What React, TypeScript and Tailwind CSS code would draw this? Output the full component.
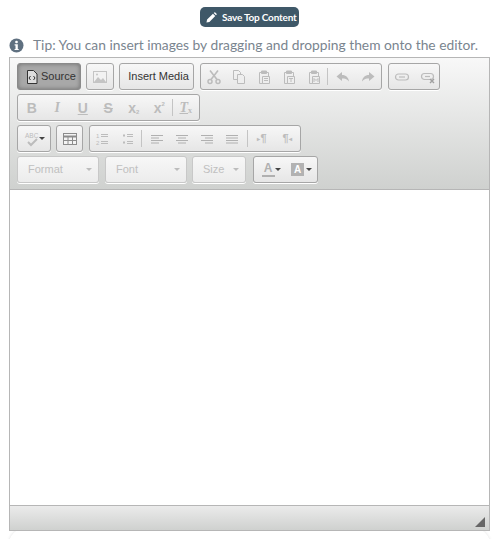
import type { ReactNode } from 'react'

const groupCls =
  'flex h-[27px] items-center rounded-[3px] border border-[#a6a6a6] bg-gradient-to-b from-[#f7f7f7] to-[#e6e6e6] shadow-[0_1px_0_#ffffff]'

function Ic({ children, w = 16, cls = 'text-[#bcbcbc]' }: { children: ReactNode; w?: number; cls?: string }) {
  return (
    <svg width={w} height={16} viewBox={`0 0 ${w} 16`} className={`block shrink-0 ${cls}`} fill="none" stroke="currentColor">
      {children}
    </svg>
  )
}

function Sep() {
  return <div className="h-[17px] w-px shrink-0 bg-[#c4c4c4]" />
}

function Caret({ dark = false }: { dark?: boolean }) {
  return <div className={`ml-[3px] h-0 w-0 border-x-[3px] border-t-[3px] border-x-transparent ${dark ? 'border-t-[#444]' : 'border-t-[#bcbcbc]'}`} />
}

function Letter({ children, cls = '' }: { children: ReactNode; cls?: string }) {
  return <span className={`flex w-[25.5px] items-center justify-center font-['Liberation_Sans',sans-serif] text-[14px] leading-none text-[#bcbcbc] ${cls}`}>{children}</span>
}

function Clip({ mark }: { mark?: ReactNode }) {
  return (
    <Ic>
      <path d="M3.5 3.5h9v11h-9z" />
      <path d="M5.5 2h5v2.5h-5z" fill="currentColor" />
      <path d="M6.5 7.5h7v7h-7z" fill="#eeeeee" />
      {mark}
    </Ic>
  )
}

function Align({ d }: { d: string }) {
  return (
    <Ic cls="text-[#b0b0b0]">
      <path d={d} />
    </Ic>
  )
}

function Combo({ label, w }: { label: string; w: string }) {
  return (
    <div className={`${groupCls} ${w} justify-between border-[#c8c8c8] from-[#f5f5f5] to-[#ececec] pl-[10px] pr-[6px]`}>
      <span className="font-['Liberation_Sans',sans-serif] text-[11px] text-[#c0c0c0]">{label}</span>
      <Caret />
    </div>
  )
}

function Row({ children }: { children: ReactNode }) {
  return <div className="flex gap-[5px]">{children}</div>
}

export default function App() {
  return (
    <div className="h-[539px] w-[499px] overflow-hidden bg-white font-['Liberation_Sans',sans-serif]">
      <div className="flex justify-center pt-[7px]">
        <button className="flex h-[20px] w-[99px] items-center gap-[5px] rounded-[5px] bg-[#3f5868] pl-[6px] font-['Lato',sans-serif] text-[10px] font-bold tracking-[-0.2px] whitespace-nowrap text-white">
          <svg width="11" height="11" viewBox="0 0 12 12" fill="white" className="shrink-0">
            <path d="M0.5 11.5l0.7-3.2 6.4-6.4 2.5 2.5-6.4 6.4zM8.4 1.1l0.7-0.6q0.5-0.4 1 0l1.4 1.4q0.4 0.5 0 1l-0.6 0.7z" />
          </svg>
          Save Top Content
        </button>
      </div>

      <div className="mt-[8px] flex h-[20px] items-center pl-[9px]">
        <svg width="15" height="15" viewBox="0 0 15 15" className="shrink-0">
          <circle cx="7.5" cy="7.5" r="7" fill="#5f7080" />
          <rect x="6.2" y="2.8" width="2.6" height="2.4" rx="1" fill="white" />
          <path d="M5.6 6.2h3.2v4.7h0.9v1.2H5.6v-1.2h0.9V7.4h-0.9z" fill="white" />
        </svg>
        <span className="ml-[9px] whitespace-nowrap font-['Lato',sans-serif] text-[13.8px] text-[#7a858f]">
          Tip: You can insert images by dragging and dropping them onto the editor.
        </span>
      </div>

      <div className="relative z-10 ml-[9px] mt-[2px] flex h-[474px] w-[481px] flex-col border border-[#b6b6b6]">
        <div className="flex h-[132px] flex-col gap-[4px] border-b border-[#b6b6b6] bg-gradient-to-b from-[#f8f8f8] to-[#cfd1cf] pl-[7px] pt-[5px]">
          <Row>
            <div className="flex h-[27px] w-[64px] items-center gap-[2px] rounded-[3px] border border-[#8a8a8a] bg-[#a8a8a8] pl-[7px] shadow-[inset_0_0_4px_#6f6f6f]">
              <Ic w={14} cls="text-[#333]">
                <path d="M2.5 1.5h6l3.5 3.5v9.5h-9.5z" fill="#dddddd" />
                <path d="M5.5 7l-1.5 2 1.5 2M8.5 7l1.5 2-1.5 2" />
              </Ic>
              <span className="text-[11px] text-[#333]">Source</span>
            </div>
            <div className={`${groupCls} w-[28px] justify-center`}>
              <Ic cls="text-[#c4c4c4]">
                <rect x="1.5" y="2.5" width="13" height="11" fill="#f2f2f2" />
                <path d="M2 13l4-5 3 3 2-2 3 4z" fill="currentColor" stroke="none" />
                <circle cx="5" cy="5.5" r="1" fill="currentColor" stroke="none" />
              </Ic>
            </div>
            <div className={`${groupCls} w-[75px] justify-center pl-[4px] text-[11px] text-[#333]`}>Insert Media</div>
            <div className={`${groupCls} ml-px w-[182px] pl-[5px]`}>
              <Ic>
                <path d="M4 1.5l7 9M12 1.5l-7 9" strokeWidth="1.6" />
                <circle cx="4" cy="12.5" r="2" strokeWidth="1.5" />
                <circle cx="12" cy="12.5" r="2" strokeWidth="1.5" />
              </Ic>
              <div className="ml-[9px]">
                <Ic>
                  <path d="M2.5 1.5h5l2 2v7h-7z" />
                  <path d="M6.5 5.5h5l2 2v7h-7z" fill="#eeeeee" />
                </Ic>
              </div>
              <div className="ml-[9px]">
                <Clip mark={<path d="M8 9.5h4M8 11.5h4" />} />
              </div>
              <div className="ml-[9px]">
                <Clip mark={<path d="M8 9.5h4M10 9.5v3.5" />} />
              </div>
              <div className="ml-[9px]">
                <Clip mark={<path d="M8 13V9.5l2 2 2-2V13" />} />
              </div>
              <div className="ml-[5px]">
                <Sep />
              </div>
              <div className="ml-[7px]">
                <Ic>
                  <path d="M7 3L1.5 7.5 7 12V9.5c3 0 5 .5 7 3-.5-4-3-6.5-7-6.5z" fill="currentColor" stroke="none" />
                </Ic>
              </div>
              <div className="ml-[9px]">
                <Ic>
                  <path d="M9 3l5.5 4.5L9 12V9.5c-3 0-5 .5-7 3 .5-4 3-6.5 7-6.5z" fill="currentColor" stroke="none" />
                </Ic>
              </div>
            </div>
            <div className={`${groupCls} ml-px w-[52px] gap-[10px] pl-[5px]`}>
              <Ic>
                <rect x="1.5" y="5" width="13" height="6" rx="3" strokeWidth="1.2" />
                <path d="M5 8h6" strokeWidth="1.2" />
              </Ic>
              <Ic>
                <rect x="1.5" y="4.5" width="12" height="6" rx="3" strokeWidth="1.2" />
                <path d="M5 7.5h5" strokeWidth="1.2" />
                <path d="M10 10l4 4M14 10l-4 4" strokeWidth="1.4" className="text-[#a0a0a0]" />
              </Ic>
            </div>
          </Row>

          <Row>
            <div className={`${groupCls} w-[183px] pl-px`}>
              <Letter cls="font-bold">B</Letter>
              <Letter cls="italic font-bold font-['Liberation_Serif',serif]">I</Letter>
              <Letter cls="underline font-bold">U</Letter>
              <Letter cls="line-through font-bold">S</Letter>
              <Letter cls="font-bold text-[12px]">
                x<span className="self-end text-[6px] leading-none">2</span>
              </Letter>
              <Letter cls="font-bold text-[12px]">
                x<span className="self-start text-[6px] leading-none">2</span>
              </Letter>
              <Sep />
              <Letter cls="italic font-bold font-['Liberation_Serif',serif] text-[#aaaaaa]">
                <span className="underline">T</span>
                <span className="self-end text-[8px] leading-none not-italic">x</span>
              </Letter>
            </div>
          </Row>

          <Row>
            <div className={`${groupCls} w-[34px] pl-[6px]`}>
              <Ic>
                <text x="1" y="7" fontSize="6.5" fill="currentColor" stroke="none" fontFamily="'Liberation Sans', sans-serif">ABC</text>
                <path d="M4 11l3 3 6-6" strokeWidth="2" />
              </Ic>
              <div className="-ml-[4px]">
                <Caret dark />
              </div>
            </div>
            <div className={`${groupCls} w-[27px] justify-center`}>
              <Ic cls="text-[#8c8c8c]">
                <rect x="1.5" y="2.5" width="13" height="11" fill="#f4f4f4" />
                <path d="M1.5 5.5h13" strokeWidth="2" />
                <path d="M1.5 9.5h13M6 5.5v8M10.5 5.5v8" />
              </Ic>
            </div>
            <div className={`${groupCls} ml-px w-[212px] pl-[5px]`}>
              <Ic>
                <text x="1" y="7" fontSize="6" fill="currentColor" stroke="none" fontFamily="'Liberation Sans', sans-serif">1</text>
                <text x="1" y="14" fontSize="6" fill="currentColor" stroke="none" fontFamily="'Liberation Sans', sans-serif">2</text>
                <path d="M6 3.5h7M6 5.5h7M6 10.5h7M6 12.5h7" />
              </Ic>
              <div className="ml-[9px]">
                <Ic>
                  <path d="M3 4.5h2M3 11.5h2" strokeWidth="2" />
                  <path d="M7 3.5h6M7 5.5h6M7 10.5h6M7 12.5h6" />
                </Ic>
              </div>
              <div className="ml-[5px]">
                <Sep />
              </div>
              <div className="ml-[7px]">
                <Align d="M2 4.5h12M2 7h8M2 9.5h12M2 12h8" />
              </div>
              <div className="ml-[9px]">
                <Align d="M2 4.5h12M4 7h8M2 9.5h12M4 12h8" />
              </div>
              <div className="ml-[9px]">
                <Align d="M2 4.5h12M6 7h8M2 9.5h12M6 12h8" />
              </div>
              <div className="ml-[9px]">
                <Align d="M2 4.5h12M2 7h12M2 9.5h12M2 12h12" />
              </div>
              <div className="ml-[7px]">
                <Sep />
              </div>
              <span className="ml-[6px] flex w-[16px] items-center justify-center text-[11px] font-bold leading-none text-[#bcbcbc]">
                <span className="text-[6px]">▸</span>¶
              </span>
              <span className="ml-[9px] flex w-[16px] items-center justify-center text-[11px] font-bold leading-none text-[#bcbcbc]">
                ¶<span className="text-[6px]">◂</span>
              </span>
            </div>
          </Row>

          <Row>
            <Combo label="Format" w="w-[82px]" />
            <div className="ml-px">
              <Combo label="Font" w="w-[82px]" />
            </div>
            <Combo label="Size" w="w-[54px]" />
            <div className={`${groupCls} ml-[2px] w-[65px] pl-[6px]`}>
              <div className="flex w-[16px] flex-col items-center">
                <span className="text-[12px] font-bold leading-[13px] text-[#b0b0b0]">A</span>
                <div className="h-[2px] w-[13px] bg-[#b0b0b0]" />
              </div>
              <div className="-ml-[4px]">
                <Caret dark />
              </div>
              <div className="ml-[10px] flex h-[13px] w-[13px] items-center justify-center bg-[#b2b2b2] text-[10px] font-bold leading-none text-white">A</div>
              <div className="-ml-[1px]">
                <Caret dark />
              </div>
            </div>
          </Row>
        </div>

        <div className="flex-1 bg-white" />

        <div className="flex h-[25px] items-end justify-end border-t border-[#b6b6b6] bg-gradient-to-b from-[#ebebeb] to-[#cfd1cf] pb-[3px] pr-[4px]">
          <div className="h-0 w-0 border-b-[10px] border-l-[10px] border-b-[#666] border-l-transparent" />
        </div>
      </div>

      <div className="mx-[8px] -mt-[4px] h-[30px] rounded-t-[20px] shadow-[0_0_3px_rgba(0,0,0,0.12)]" />
    </div>
  )
}
